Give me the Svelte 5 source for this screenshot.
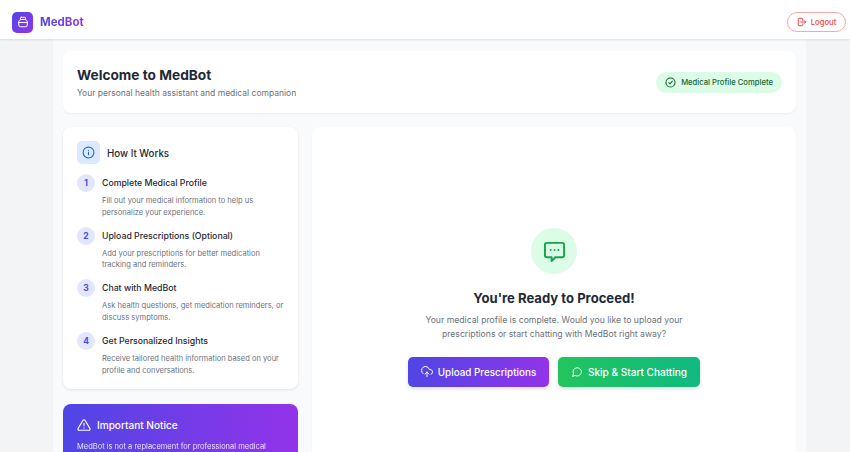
<script>
  const steps = [
    { n: 1, title: 'Complete Medical Profile', text: 'Fill out your medical information to help us personalize your experience.' },
    { n: 2, title: 'Upload Prescriptions (Optional)', text: 'Add your prescriptions for better medication tracking and reminders.' },
    { n: 3, title: 'Chat with MedBot', text: 'Ask health questions, get medication reminders, or discuss symptoms.' },
    { n: 4, title: 'Get Personalized Insights', text: 'Receive tailored health information based on your profile and conversations.' }
  ];
</script>

<div class="page">
  <header class="topbar">
    <div class="brand">
      <div class="logo">
        <svg width="12" height="12" viewBox="0 0 24 24" fill="none" stroke="#fff" stroke-width="2" stroke-linecap="round" stroke-linejoin="round">
          <rect x="7" y="2.500" width="10" height="4.500" rx="1.500" />
          <path d="M7.500 7C5 8 3.500 9.500 3.500 12v6a3.500 3.500 0 0 0 3.500 3.500h10a3.500 3.500 0 0 0 3.500-3.500v-6c0-2.500-1.500-4-4-5" />
          <path d="M3.500 13h17" />
        </svg>
      </div>
      <span class="brandName">MedBot</span>
    </div>
    <button class="logout">
      <svg width="10" height="10" viewBox="0 0 24 24" fill="none" stroke="currentColor" stroke-width="2.400" stroke-linecap="round" stroke-linejoin="round">
        <path d="M14 8V5a2 2 0 0 0-2-2H5a2 2 0 0 0-2 2v14a2 2 0 0 0 2 2h7a2 2 0 0 0 2-2v-3" />
        <path d="M9 12h12l-3-3m0 6 3-3" />
      </svg>
      Logout
    </button>
  </header>

  <main class="main">
    <section class="card welcome">
      <div>
        <h1>Welcome to MedBot</h1>
        <p>Your personal health assistant and medical companion</p>
      </div>
      <div class="status">
        <svg width="11" height="11" viewBox="0 0 24 24" fill="none" stroke="currentColor" stroke-width="2.200" stroke-linecap="round" stroke-linejoin="round">
          <circle cx="12" cy="12" r="10" />
          <path d="m8 12 3 3 5-6" />
        </svg>
        Medical Profile Complete
      </div>
    </section>

    <div class="columns">
      <aside class="side">
        <section class="card how">
          <div class="howHead">
            <div class="infoIcon">
              <svg width="13" height="13" viewBox="0 0 24 24" fill="none" stroke="#2563eb" stroke-width="2" stroke-linecap="round" stroke-linejoin="round">
                <circle cx="12" cy="12" r="10" />
                <path d="M12 16v-5M12 8h.01" />
              </svg>
            </div>
            <h2>How It Works</h2>
          </div>
          {#each steps as step}
            <div class="step">
              <div class="num">{step.n}</div>
              <div>
                <h3>{step.title}</h3>
                <p>{step.text}</p>
              </div>
            </div>
          {/each}
        </section>

        <section class="notice">
          <div class="noticeHead">
            <svg width="14" height="14" viewBox="0 0 24 24" fill="none" stroke="#fff" stroke-width="2" stroke-linecap="round" stroke-linejoin="round">
              <path d="M10.300 3.900 1.800 18a2 2 0 0 0 1.700 3h17a2 2 0 0 0 1.700-3L13.700 3.900a2 2 0 0 0-3.400 0z" />
              <path d="M12 9v4M12 17h.01" />
            </svg>
            <h2>Important Notice</h2>
          </div>
          <p>MedBot is not a replacement for professional medical advice, diagnosis, or treatment.</p>
        </section>
      </aside>

      <section class="card ready">
        <div class="bubble">
          <svg width="23" height="23" viewBox="0 0 24 24" fill="none" stroke="#16a34a" stroke-width="2" stroke-linecap="round" stroke-linejoin="round">
            <path d="M4 3h16a2 2 0 0 1 2 2v11a2 2 0 0 1-2 2h-7l-4 4v-4H4a2 2 0 0 1-2-2V5a2 2 0 0 1 2-2z" />
            <path d="M8 10.500h.01M12 10.500h.01M16 10.500h.01" />
          </svg>
        </div>
        <h2>You're Ready to Proceed!</h2>
        <p>Your medical profile is complete. Would you like to upload your prescriptions or start chatting with MedBot right away?</p>
        <div class="actions">
          <button class="action upload">
            <svg width="12" height="12" viewBox="0 0 24 24" fill="none" stroke="currentColor" stroke-width="2" stroke-linecap="round" stroke-linejoin="round">
              <path d="M12 21v-9m-4 4 4-4 4 4" />
              <path d="M20 16.600A5 5 0 0 0 18 7h-1.300A8 8 0 1 0 4 15.300" />
            </svg>
            Upload Prescriptions
          </button>
          <button class="action chat">
            <svg width="12" height="12" viewBox="0 0 24 24" fill="none" stroke="currentColor" stroke-width="2" stroke-linecap="round" stroke-linejoin="round">
              <path d="M21 11.500a8.400 8.400 0 0 1-12.400 7.400L3 21l2-5.500A8.400 8.400 0 1 1 21 11.500z" />
            </svg>
            Skip &amp; Start Chatting
          </button>
        </div>
      </section>
    </div>
  </main>
</div>

<style>
  :global(body) {
    margin: 0;
    background: #f3f4f6;
    font-family: Inter, "Liberation Sans", sans-serif;
  }

  h1, h2, h3, p {
    margin: 0;
  }

  button {
    font-family: inherit;
    cursor: pointer;
  }

  .page {
    height: 452px;
    overflow: hidden;
  }

  .topbar {
    height: 39px;
    box-sizing: border-box;
    background: #fff;
    box-shadow: 0 1px 2px rgba(0, 0, 0, 0.1);
    display: flex;
    justify-content: space-between;
    align-items: center;
    padding: 5px 4px 0 12px;
    position: relative;
  }

  .brand {
    display: flex;
    align-items: center;
    gap: 7px;
  }

  .logo {
    width: 21px;
    height: 21px;
    border-radius: 5px;
    background: linear-gradient(135deg, #4f46e5, #9333ea);
    display: flex;
    align-items: center;
    justify-content: center;
  }

  .brandName {
    font-size: 11.500px;
    font-weight: 700;
    background: linear-gradient(90deg, #4f46e5, #9333ea);
    -webkit-background-clip: text;
    background-clip: text;
    color: transparent;
  }

  .logout {
    width: 59px;
    height: 20px;
    border: 1px solid #fca5a5;
    border-radius: 10px;
    background: #fff;
    color: #ef4444;
    font-size: 7.700px;
    font-weight: 500;
    display: flex;
    align-items: center;
    justify-content: center;
    gap: 4px;
    padding: 0;
  }

  .main {
    width: 733px;
    margin-left: 53px;
    padding: 12px 10px;
    background: #f9fafb;
    height: 413px;
  }

  .card {
    background: #fff;
    border-radius: 8px;
    box-shadow: 0 1px 2px rgba(0, 0, 0, 0.05);
  }

  .welcome {
    height: 62px;
    display: flex;
    justify-content: space-between;
    align-items: center;
    padding: 0 14px;
    margin-bottom: 14px;
  }

  .welcome h1 {
    font-size: 13.700px;
    font-weight: 700;
    color: #1f2937;
    line-height: 20px;
  }

  .welcome p {
    font-size: 8.500px;
    color: #6b7280;
    line-height: 14px;
    margin-top: 1px;
  }

  .status {
    height: 21px;
    padding: 0 9px;
    border-radius: 11px;
    background: #dcfce7;
    color: #166534;
    font-size: 7.670px;
    font-weight: 500;
    display: flex;
    align-items: center;
    gap: 5px;
  }

  .columns {
    display: flex;
    gap: 14px;
    align-items: flex-start;
  }

  .side {
    width: 235px;
    flex: none;
  }

  .how {
    padding: 14px 10px 14px 14px;
    height: 262px;
    box-sizing: border-box;
    box-shadow: 0 1px 3px rgba(0, 0, 0, 0.1);
  }

  .howHead {
    display: flex;
    align-items: center;
    gap: 7px;
    margin-bottom: 10px;
  }

  .infoIcon {
    width: 23px;
    height: 23px;
    border-radius: 5px;
    background: #dbeafe;
    display: flex;
    align-items: center;
    justify-content: center;
  }

  .howHead h2 {
    font-size: 9.740px;
    font-weight: 500;
    color: #1f2937;
    padding-top: 2px;
  }

  .step {
    display: flex;
    gap: 7px;
    margin-bottom: 8.700px;
  }

  .num {
    width: 18px;
    height: 18px;
    flex: none;
    border-radius: 50%;
    background: #e0e7ff;
    color: #4f46e5;
    font-size: 8.500px;
    font-weight: 700;
    display: flex;
    align-items: center;
    justify-content: center;
  }

  .step h3 {
    font-size: 8.740px;
    font-weight: 500;
    color: #1f2937;
    line-height: 18px;
    margin-bottom: 3px;
  }

  .step p {
    font-size: 7.550px;
    color: #6b7280;
    line-height: 11.500px;
  }

  .notice {
    margin-top: 15px;
    height: 120px;
    box-sizing: border-box;
    padding: 14px;
    border-radius: 8px;
    background: linear-gradient(90deg, #4f46e5, #9333ea);
    color: #fff;
  }

  .noticeHead {
    display: flex;
    align-items: center;
    gap: 6px;
    margin-bottom: 9px;
  }

  .noticeHead h2 {
    font-size: 10.050px;
    font-weight: 500;
  }

  .notice p {
    font-size: 7.500px;
    line-height: 12px;
    opacity: 0.85;
  }

  .ready {
    flex: 1;
    height: 400px;
    display: flex;
    flex-direction: column;
    align-items: center;
    padding-top: 101px;
    box-sizing: border-box;
  }

  .bubble {
    width: 46px;
    height: 46px;
    border-radius: 50%;
    background: #dcfce7;
    display: flex;
    align-items: center;
    justify-content: center;
    margin-bottom: 14px;
  }

  .ready h2 {
    font-size: 13.100px;
    font-weight: 700;
    color: #1f2937;
    line-height: 20px;
    margin-bottom: 5px;
  }

  .ready p {
    width: 300px;
    text-align: center;
    font-size: 8.660px;
    line-height: 14px;
    color: #6b7280;
    margin-bottom: 16px;
  }

  .actions {
    display: flex;
    gap: 9px;
  }

  .action {
    height: 30px;
    border: none;
    border-radius: 5px;
    color: #fff;
    font-weight: 500;
    display: flex;
    align-items: center;
    justify-content: center;
    gap: 5px;
    box-shadow: 0 2px 4px rgba(0, 0, 0, 0.12);
  }

  .upload {
    width: 141px;
    font-size: 9.850px;
    background: linear-gradient(90deg, #4f46e5, #9333ea);
  }

  .chat {
    width: 142px;
    font-size: 10.050px;
    background: linear-gradient(90deg, #22c55e, #10b981);
  }
</style>
